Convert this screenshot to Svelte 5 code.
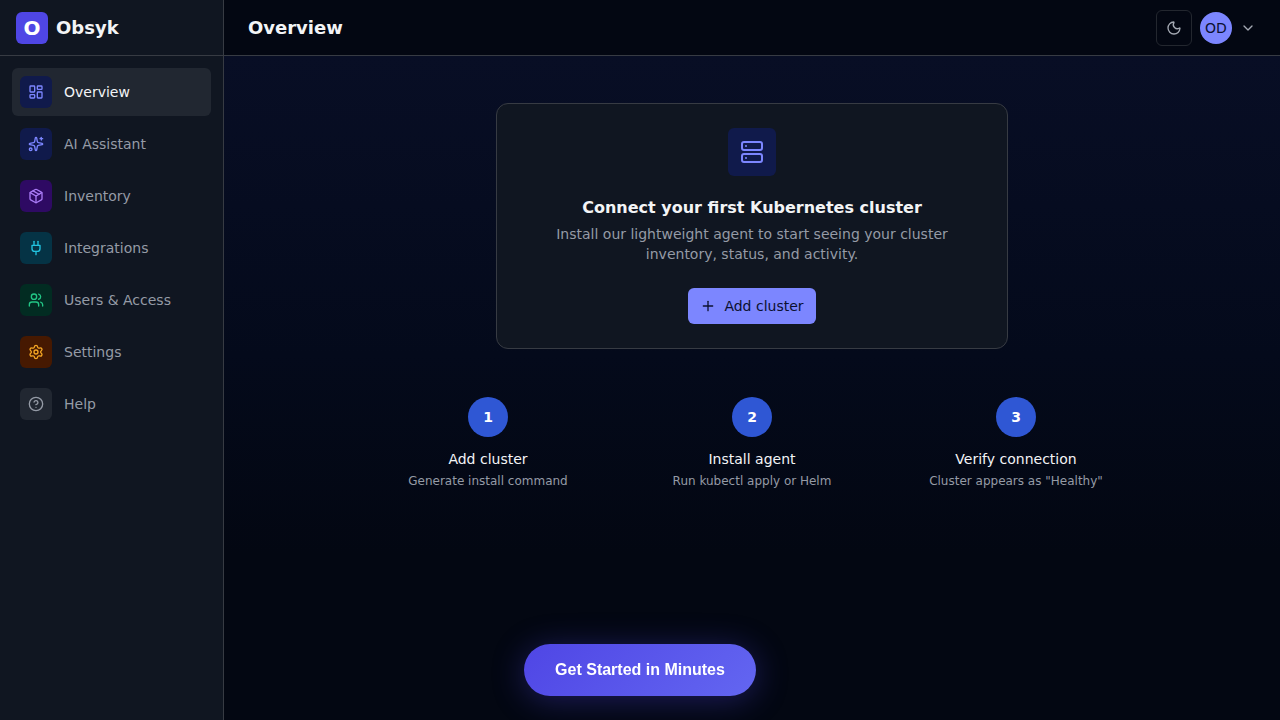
<script>
  const nav = [
    {
      label: "Overview",
      tone: "indigo",
      paths: [
        "M4 3h5a1 1 0 0 1 1 1v7a1 1 0 0 1-1 1H4a1 1 0 0 1-1-1V4a1 1 0 0 1 1-1z",
        "M15 3h5a1 1 0 0 1 1 1v3a1 1 0 0 1-1 1h-5a1 1 0 0 1-1-1V4a1 1 0 0 1 1-1z",
        "M15 12h5a1 1 0 0 1 1 1v7a1 1 0 0 1-1 1h-5a1 1 0 0 1-1-1v-7a1 1 0 0 1 1-1z",
        "M4 16h5a1 1 0 0 1 1 1v3a1 1 0 0 1-1 1H4a1 1 0 0 1-1-1v-3a1 1 0 0 1 1-1z"
      ]
    },
    {
      label: "AI Assistant",
      tone: "indigo",
      paths: [
        "M11.017 2.814a1 1 0 0 1 1.966 0l1.051 5.558a2 2 0 0 0 1.594 1.594l5.558 1.051a1 1 0 0 1 0 1.966l-5.558 1.051a2 2 0 0 0-1.594 1.594l-1.051 5.558a1 1 0 0 1-1.966 0l-1.051-5.558a2 2 0 0 0-1.594-1.594l-5.558-1.051a1 1 0 0 1 0-1.966l5.558-1.051a2 2 0 0 0 1.594-1.594z",
        "M20 2v4",
        "M22 4h-4",
        "M4 18a2 2 0 1 0 0 4 2 2 0 0 0 0-4z"
      ]
    },
    {
      label: "Inventory",
      tone: "purple",
      paths: [
        "M11 21.73a2 2 0 0 0 2 0l7-4A2 2 0 0 0 21 16V8a2 2 0 0 0-1-1.73l-7-4a2 2 0 0 0-2 0l-7 4A2 2 0 0 0 3 8v8a2 2 0 0 0 1 1.73z",
        "M12 22V12",
        "M3.29 7 12 12l8.71-5",
        "m7.5 4.27 9 5.15"
      ]
    },
    {
      label: "Integrations",
      tone: "cyan",
      paths: [
        "M12 22v-5",
        "M9 8V2",
        "M15 8V2",
        "M18 8v5a4 4 0 0 1-4 4h-4a4 4 0 0 1-4-4V8z"
      ]
    },
    {
      label: "Users & Access",
      tone: "green",
      paths: [
        "M16 21v-2a4 4 0 0 0-4-4H6a4 4 0 0 0-4 4v2",
        "M9 3a4 4 0 1 0 0 8 4 4 0 0 0 0-8z",
        "M22 21v-2a4 4 0 0 0-3-3.87",
        "M16 3.13a4 4 0 0 1 0 7.75"
      ]
    },
    {
      label: "Settings",
      tone: "amber",
      paths: [
        "M9.671 4.136a2.34 2.34 0 0 1 4.659 0 2.34 2.34 0 0 0 3.319 1.915 2.34 2.34 0 0 1 2.33 4.033 2.34 2.34 0 0 0 0 3.831 2.34 2.34 0 0 1-2.33 4.033 2.34 2.34 0 0 0-3.319 1.915 2.34 2.34 0 0 1-4.659 0 2.34 2.34 0 0 0-3.32-1.915 2.34 2.34 0 0 1-2.33-4.033 2.34 2.34 0 0 0 0-3.831A2.34 2.34 0 0 1 6.35 6.051a2.34 2.34 0 0 0 3.319-1.915",
        "M12 9a3 3 0 1 0 0 6 3 3 0 0 0 0-6z"
      ]
    },
    {
      label: "Help",
      tone: "gray",
      paths: [
        "M12 2a10 10 0 1 0 0 20 10 10 0 0 0 0-20z",
        "M9.09 9a3 3 0 0 1 5.83 1c0 2-3 3-3 3",
        "M12 17h.01"
      ]
    }
  ]

  const server = [
    "M4 2h16a2 2 0 0 1 2 2v4a2 2 0 0 1-2 2H4a2 2 0 0 1-2-2V4a2 2 0 0 1 2-2z",
    "M4 14h16a2 2 0 0 1 2 2v4a2 2 0 0 1-2 2H4a2 2 0 0 1-2-2v-4a2 2 0 0 1 2-2z",
    "M6 6h.01",
    "M6 18h.01"
  ]
  const moon = ["M20.985 12.486a9 9 0 1 1-9.473-9.472c.405-.022.617.46.402.803a6 6 0 0 0 8.268 8.268c.344-.215.825-.004.803.401"]
  const chevron = ["m6 9 6 6 6-6"]
  const plus = ["M5 12h14", "M12 5v14"]

  const steps = [
    { title: "Add cluster", text: "Generate install command" },
    { title: "Install agent", text: "Run kubectl apply or Helm" },
    { title: "Verify connection", text: "Cluster appears as \"Healthy\"" }
  ]

  let current = $state("Overview")

  function select(event, label) {
    event.preventDefault()
    current = label
  }
</script>

{#snippet icon(paths, size = 16)}
  <svg
    width={size}
    height={size}
    viewBox="0 0 24 24"
    fill="none"
    stroke="currentColor"
    stroke-width="2"
    stroke-linecap="round"
    stroke-linejoin="round"
    aria-hidden="true"
  >
    {#each paths as d}
      <path {d} />
    {/each}
  </svg>
{/snippet}

<div class="layout">
  <aside>
    <a class="brand" href="#home">
      <span class="logo">O</span>
      <span>Obsyk</span>
    </a>
    <nav>
      {#each nav as item}
        <a
          href="#{item.label}"
          class:active={current === item.label}
          onclick={(event) => select(event, item.label)}
        >
          <span class="tile {item.tone}">{@render icon(item.paths)}</span>
          {item.label}
        </a>
      {/each}
    </nav>
  </aside>

  <div class="page">
    <header>
      <h1>Overview</h1>
      <div class="actions">
        <button class="theme" aria-label="Toggle theme">{@render icon(moon)}</button>
        <button class="account" aria-label="Account menu">
          <span class="avatar">OD</span>
          {@render icon(chevron)}
        </button>
      </div>
    </header>

    <main>
      <section class="card">
        <span class="tile large indigo">{@render icon(server, 24)}</span>
        <h2>Connect your first Kubernetes cluster</h2>
        <p>Install our lightweight agent to start seeing your cluster inventory, status, and activity.</p>
        <button class="add">
          {@render icon(plus)}
          Add cluster
        </button>
      </section>

      <ol class="steps">
        {#each steps as step, i}
          <li>
            <span class="number">{i + 1}</span>
            <h3>{step.title}</h3>
            <p>{step.text}</p>
          </li>
        {/each}
      </ol>
    </main>
  </div>
</div>

<button class="cta">Get Started in Minutes</button>

<style>
  :global(body) {
    margin: 0;
    background: #030712;
  }
  * {
    box-sizing: border-box;
  }
  h1, h2, h3, p, ol {
    margin: 0;
    padding: 0;
  }
  button {
    font: inherit;
    color: inherit;
    border: 0;
    background: none;
    padding: 0;
    cursor: pointer;
  }
  a {
    color: inherit;
    text-decoration: none;
  }
  svg {
    display: block;
    flex-shrink: 0;
  }
  .layout {
    display: flex;
    min-height: 100vh;
    font-family: "DejaVu Sans", sans-serif;
    font-size: 14px;
    line-height: 20px;
    color: #f3f4f6;
  }
  aside {
    width: 224px;
    flex-shrink: 0;
    background: #101621;
    border-right: 1px solid #373b43;
  }
  .brand {
    display: flex;
    align-items: center;
    gap: 8px;
    height: 56px;
    padding: 0 16px;
    border-bottom: 1px solid #373b43;
    font-size: 18px;
    font-weight: 700;
  }
  .logo {
    display: grid;
    place-items: center;
    width: 32px;
    height: 32px;
    border-radius: 6px;
    background: #4f46e5;
    color: #fff;
    font-size: 20px;
  }
  nav {
    display: flex;
    flex-direction: column;
    gap: 4px;
    padding: 12px;
  }
  nav a {
    display: flex;
    align-items: center;
    gap: 12px;
    padding: 8px;
    border-radius: 6px;
    color: #959ba6;
  }
  nav a.active {
    background: #212731;
    color: #f3f4f6;
  }
  .tile {
    display: grid;
    place-items: center;
    width: 32px;
    height: 32px;
    border-radius: 6px;
  }
  .large {
    width: 48px;
    height: 48px;
  }
  .indigo {
    background: #101a4b;
    color: #7c86ff;
  }
  .purple {
    background: #2e0a63;
    color: #a97bf5;
  }
  .cyan {
    background: #053345;
    color: #22c3e0;
  }
  .green {
    background: #022c22;
    color: #22c585;
  }
  .amber {
    background: #461901;
    color: #f5a623;
  }
  .gray {
    background: #212731;
    color: #959ba6;
  }
  .page {
    display: flex;
    flex-direction: column;
    flex: 1;
    min-width: 0;
  }
  header {
    display: flex;
    align-items: center;
    justify-content: space-between;
    height: 56px;
    padding: 0 24px;
    background: #030712;
    border-bottom: 1px solid #373b43;
  }
  h1 {
    font-size: 18px;
    font-weight: 700;
  }
  .actions, .account {
    display: flex;
    align-items: center;
    gap: 8px;
  }
  .theme {
    display: grid;
    place-items: center;
    width: 36px;
    height: 36px;
    border: 1px solid #23272f;
    border-radius: 6px;
    color: #a4a9b3;
  }
  .account {
    color: #a4a9b3;
  }
  .avatar {
    display: grid;
    place-items: center;
    width: 32px;
    height: 32px;
    border-radius: 50%;
    background: #7c86ff;
    color: #0b1030;
  }
  main {
    display: flex;
    flex-direction: column;
    align-items: center;
    gap: 48px;
    flex: 1;
    padding: 47px 24px;
    background: linear-gradient(#080e25, #040a1b 45%, #030712 75%);
  }
  .card {
    display: flex;
    flex-direction: column;
    align-items: center;
    width: 100%;
    max-width: 512px;
    padding: 24px;
    border: 1px solid #373b43;
    border-radius: 12px;
    background: #101621;
    text-align: center;
  }
  h2 {
    margin-top: 20px;
    font-size: 16px;
    line-height: 24px;
    font-weight: 700;
  }
  .card p {
    max-width: 400px;
    margin: 4px 0 24px;
    color: #959ba6;
  }
  .add {
    display: flex;
    align-items: center;
    gap: 8px;
    height: 36px;
    padding: 0 12px;
    border-radius: 6px;
    background: #7c86ff;
    color: #0b1030;
  }
  .steps {
    display: grid;
    grid-template-columns: repeat(3, 1fr);
    gap: 24px;
    width: 100%;
    max-width: 768px;
    list-style: none;
    text-align: center;
  }
  .steps li {
    display: flex;
    flex-direction: column;
    align-items: center;
  }
  .number {
    display: grid;
    place-items: center;
    width: 40px;
    height: 40px;
    margin-bottom: 12px;
    border-radius: 50%;
    background: #2f57d4;
    color: #fff;
    font-weight: 700;
  }
  h3 {
    font-size: 14px;
    font-weight: 400;
  }
  .steps p {
    margin-top: 4px;
    font-size: 12px;
    line-height: 16px;
    color: #959ba6;
  }
  .cta {
    position: fixed;
    bottom: 24px;
    left: 50%;
    transform: translateX(-50%);
    min-width: 232px;
    padding: 16px 28px;
    border-radius: 26px;
    background: linear-gradient(135deg, #4f46e5, #6366f1);
    box-shadow: 0 4px 32px rgba(79, 70, 229, 0.35);
    color: #fff;
    font-family: "Liberation Sans", Arial, sans-serif;
    font-size: 16px;
    line-height: 20px;
    font-weight: 700;
    white-space: nowrap;
  }
</style>
